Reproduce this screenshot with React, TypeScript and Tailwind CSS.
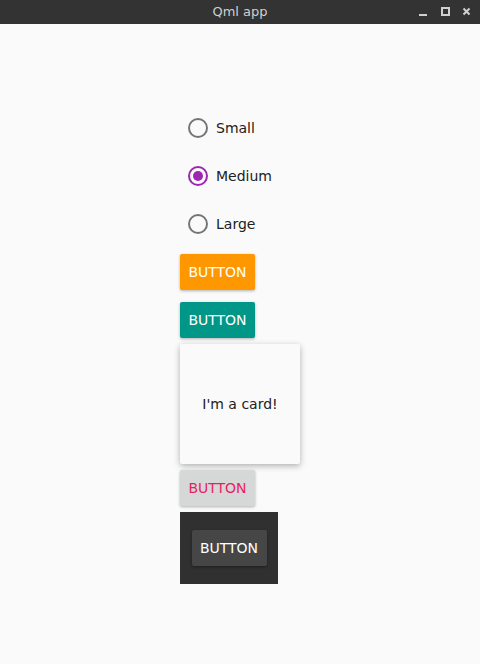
import React from "react";

const font = { fontFamily: '"DejaVu Sans", sans-serif' };

function Radio({ label, checked }: { label: string; checked?: boolean }) {
  return (
    <div className="h-12 flex items-center pl-2">
      <div
        className={`w-5 h-5 rounded-full border-2 flex items-center justify-center ${
          checked ? "border-[#9c27b0]" : "border-[#757575]"
        }`}
      >
        {checked && <div className="w-[10px] h-[10px] rounded-full bg-[#9c27b0]" />}
      </div>
      <span className="ml-2 text-[14px] text-[#212121]" style={font}>
        {label}
      </span>
    </div>
  );
}

function Btn({ bg, color }: { bg: string; color: string }) {
  return (
    <div className="h-12 flex items-center">
      <div
        className={`w-[75px] h-9 rounded-[2px] flex items-center justify-center text-[14px] shadow-[0_1px_3px_rgba(0,0,0,0.3)] ${bg} ${color}`}
        style={font}
      >
        BUTTON
      </div>
    </div>
  );
}

export default function App() {
  return (
    <div className="w-[480px] h-[664px] bg-[#fafafa] flex flex-col">
      <div className="h-6 bg-[#333333] relative flex items-center justify-center shrink-0">
        <span className="text-[13px] text-[#cfcfcf]" style={font}>
          Qml app
        </span>
        <div className="absolute right-0 top-0 h-6 flex items-center">
          <svg width="70" height="24" viewBox="0 0 70 24">
            <rect x="9" y="14" width="8" height="2" fill="#d0d0d0" />
            <rect x="32" y="8" width="7" height="7" fill="none" stroke="#d0d0d0" strokeWidth="2" />
            <path d="M53.5 8.5 L59.5 14.5 M59.5 8.5 L53.5 14.5" stroke="#d0d0d0" strokeWidth="2" />
          </svg>
        </div>
      </div>
      <div className="flex flex-col pl-[180px] pt-[80px]">
        <Radio label="Small" />
        <Radio label="Medium" checked />
        <Radio label="Large" />
        <Btn bg="bg-[#ff9800]" color="text-white" />
        <Btn bg="bg-[#009688]" color="text-white" />
        <div
          className="w-[120px] h-[120px] bg-[#fafafa] rounded-[2px] shadow-[0_2px_6px_rgba(0,0,0,0.3)] flex items-center justify-center text-[14px] text-[#212121]"
          style={font}
        >
          I'm a card!
        </div>
        <Btn bg="bg-[#d6d7d7]" color="text-[#e91e63]" />
        <div className="w-[98px] h-[72px] bg-[#303030] flex items-center justify-center">
          <div
            className="w-[75px] h-9 rounded-[2px] bg-[#464646] flex items-center justify-center text-[14px] text-white shadow-[0_1px_3px_rgba(0,0,0,0.4)]"
            style={font}
          >
            BUTTON
          </div>
        </div>
      </div>
    </div>
  );
}
